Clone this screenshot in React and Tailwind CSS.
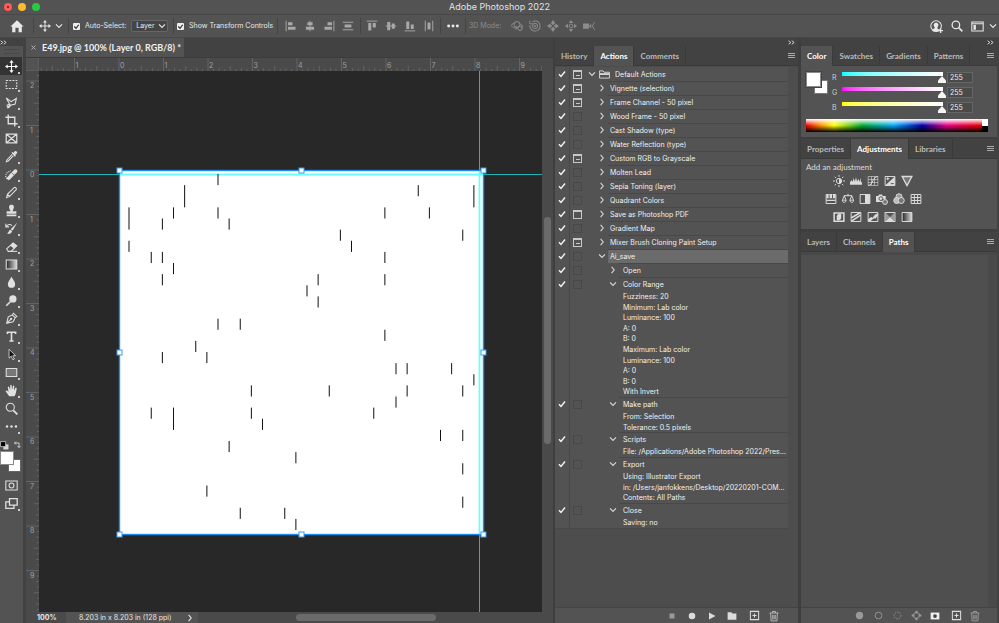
import React, { useState } from "react";

const INCH = 44.5;

// [column, row, length] on the 32 x 32 grid of the artwork
const MARKS = [
    [8, 0, 1], [5, 1, 2], [26, 1, 1], [31, 1, 2], [0, 3, 2], [4, 3, 1], [8, 3, 1], [23, 3, 1], [27, 3, 1],
    [3, 4, 1], [9, 4, 1], [19, 5, 1], [30, 5, 1], [0, 6, 1], [20, 6, 1], [2, 7, 1], [3, 7, 1], [23, 7, 1],
    [4, 8, 1], [3, 9, 1], [17, 9, 1], [23, 9, 1], [16, 10, 1], [17, 11, 1], [8, 13, 1], [10, 13, 1],
    [23, 14, 1], [6, 15, 1], [3, 16, 1], [7, 16, 1], [24, 17, 1], [25, 17, 1], [29, 17, 1], [31, 18, 1],
    [11, 19, 1], [18, 19, 1], [25, 19, 1], [30, 19, 1], [24, 20, 1], [2, 21, 1], [4, 21, 2], [11, 21, 1],
    [22, 21, 1], [12, 22, 1], [28, 23, 1], [30, 23, 1], [9, 24, 1], [15, 25, 1], [30, 26, 1], [7, 28, 1],
    [30, 29, 1], [10, 30, 1], [14, 30, 1], [15, 31, 1],
];

const ACTIONS = [
    { label: "Default Actions", depth: 0, open: true, dialog: "mixed", folder: true },
    { label: "Vignette (selection)", depth: 1, dialog: "mixed" },
    { label: "Frame Channel - 50 pixel", depth: 1, dialog: "mixed" },
    { label: "Wood Frame - 50 pixel", depth: 1 },
    { label: "Cast Shadow (type)", depth: 1 },
    { label: "Water Reflection (type)", depth: 1 },
    { label: "Custom RGB to Grayscale", depth: 1, dialog: "mixed" },
    { label: "Molten Lead", depth: 1 },
    { label: "Sepia Toning (layer)", depth: 1 },
    { label: "Quadrant Colors", depth: 1 },
    { label: "Save as Photoshop PDF", depth: 1, dialog: "on" },
    { label: "Gradient Map", depth: 1 },
    { label: "Mixer Brush Cloning Paint Setup", depth: 1, dialog: "mixed" },
    { label: "Ai_save", depth: 1, open: true, selected: true },
    { label: "Open", depth: 2 },
    {
        label: "Color Range",
        depth: 2,
        open: true,
        size: "h-[106px]",
        details: [
            "Fuzziness: 20",
            "Minimum: Lab color",
            "Luminance: 100",
            "A: 0",
            "B: 0",
            "Maximum: Lab color",
            "Luminance: 100",
            "A: 0",
            "B: 0",
            "With Invert",
        ],
    },
    { label: "Make path", depth: 2, open: true, size: "h-[21px]", details: ["From: Selection", "Tolerance: 0.5 pixels"] },
    { label: "Scripts", depth: 2, open: true, size: "h-[11px]", details: ["File: /Applications/Adobe Photoshop 2022/Presets/Scripts"] },
    {
        label: "Export",
        depth: 2,
        open: true,
        size: "h-[32px]",
        details: ["Using: Illustrator Export", "in: /Users/janfokkens/Desktop/20220201-COMPOSITION", "Contents: All Paths"],
    },
    { label: "Close", depth: 2, open: true, size: "h-[11px]", details: ["Saving: no"] },
];

const Svg = ({ size = "size-[14px]", children }) => (
    <svg
        viewBox="0 0 16 16"
        className={`${size} shrink-0`}
        fill="none"
        stroke="currentColor"
        strokeWidth="1.3"
        aria-hidden="true"
    >
        {children}
    </svg>
);

const solid = { fill: "currentColor", stroke: "none" };

const movePath = (
    <>
        <path d="M8 2v12M2 8h12" />
        <path {...solid} d="M8 0l2.6 3.4H5.4zM8 16l2.6-3.4H5.4zM0 8l3.4-2.6v5.2zM16 8l-3.4-2.6v5.2z" />
    </>
);

const Chevron = ({ open = true }) => (
    <svg viewBox="0 0 8 8" className="size-[8px] shrink-0" fill="none" stroke="currentColor" strokeWidth="1.1" aria-hidden="true">
        <path d={open ? "M1 2.3l3 3.2 3-3.2" : "M2.6 .8l2.6 3.2-2.6 3.2"} />
    </svg>
);

const DoubleChevron = () => (
    <svg viewBox="0 0 12 8" className="h-[5px] w-[7px]" fill="none" stroke="#ddd" strokeWidth="1.6" aria-hidden="true">
        <path d="M1 1l4 3-4 3M6.5 1l4 3-4 3" />
    </svg>
);

const PlusBox = () => (
    <Svg size="size-[11px]">
        <path d="M2 2h12v12H2zM8 5v6M5 8h6" strokeWidth="1.5" />
    </Svg>
);

const Trash = () => (
    <Svg size="size-[12px]">
        <path d="M2 4h12M6 4V2h4v2M3.5 4l.6 10.5h7.8l.6-10.5M6.3 6.5v6M8 6.5v6M9.7 6.5v6" />
    </Svg>
);

const TOOLS = [
    { name: "Move", active: true, icon: movePath },
    { name: "Marquee", icon: <path d="M1.5 3h13v10h-13z" strokeDasharray="2.4 1.4" /> },
    { name: "Lasso", icon: <path d="M1.5 2.5l6 4.5 6.500-4-1.500 7-6 1.500zM6.500 11.500c-3-2-5 0-3.500 1.200 1.500 1 2.500-1 3.500-1.200-.5 2-2 3-4 3" /> },
    { name: "Crop", icon: <path d="M4 .5V12h11.500M.5 4H12v11.500" strokeWidth="1.7" /> },
    { name: "Frame", single: true, icon: <path d="M1.5 2.5h13v11h-13zM1.500 2.500l13 11M14.500 2.500l-13 11" strokeWidth="1.5" /> },
    {
        name: "Eyedropper",
        icon: (
            <>
                <path d="M9 5.500l-6.500 6.500-.8 2.300 2.300-.8L10.500 7" />
                <path {...solid} d="M8 3.500l1.200-1 1.300 1.200c1-2 2-3 3.500-2.200 2 1.500 1 3-1.500 4.200l1 1.300-1.200 1.200z" />
            </>
        ),
    },
    {
        name: "Healing Brush",
        icon: (
            <>
                <path {...solid} d="M6 7.500L11.500 2c2-1.500 5 1.200 3.200 3.300L9 11c-2 1.800-5-1.200-3-3.500z" />
                <path d="M5 14.500a5 5 0 01-2-9l4-2" strokeDasharray="1.5 1" />
                <path {...solid} d="M3 11l3-3 3 3-3 3c-2 1.500-5-1-3-3z" />
                <path d="M8 5.500l3.500 3.500" stroke="#535353" strokeWidth=".9" />
            </>
        ),
    },
    { name: "Brush", icon: <path d="M2 14.300l1-4L11.200 2c1.500-1 3.600.8 2.600 2.600L5.800 12.800zM3 10.300l2.800 2.500" /> },
    { name: "Clone Stamp", icon: <path {...solid} d="M6.500 8C3.500 3.500 5.500 1 8 1s4.500 2.500 1.500 7v1H14v3H2V9h4.500zM2 13h12v2H2z" /> },
    {
        name: "History Brush",
        icon: (
            <>
                <path {...solid} d="M15 1L9.500 10.500 7 8.800zM6.500 9.500l2.200 1.700c0 2.500-3 4.300-6.200 3 2-.8 2-4 4-4.700z" />
                <path d="M1.500 5.500c2-3 5-3 7-1M1 2v4h4" />
            </>
        ),
    },
    {
        name: "Eraser",
        icon: (
            <>
                <path d="M2 11l8-7.500 4.500 3.500-7 7H4z" />
                <path {...solid} d="M6.500 7L10 3.500 14.500 7 11 10.500z" />
                <path d="M7 14h8" />
            </>
        ),
    },
    { name: "Gradient", icon: <path d="M1.500 2.500h13v11h-13z" fill="url(#toolGradient)" /> },
    { name: "Blur", icon: <path {...solid} d="M8 1c1.500 3 4.500 6 4.500 9a4.500 4.500 0 01-9 0c0-3 3-6 4.500-9z" /> },
    {
        name: "Dodge",
        icon: (
            <>
                <circle {...solid} cx="9.7" cy="6" r="4.5" />
                <path d="M6.500 9.500L1.500 14.500" strokeWidth="2" />
            </>
        ),
    },
    {
        name: "Pen",
        icon: (
            <>
                <path d="M2 14l2-8 5-2.500 3.500 3.500L10 12zM2 14l5-5M9 3.500l1.500-2 4 4-2 1.500" />
                <circle {...solid} cx="7.5" cy="8.5" r="1.4" />
            </>
        ),
    },
    { name: "Type", icon: <path d="M3 5V2.800h10V5M8 2.800v10.700M5.500 13.500h5" strokeWidth="2" /> },
    { name: "Path Selection", icon: <path d="M5 1.500v11l2.700-2.500 2 4.500 1.800-.8-2-4.200h3.500z" fill="#111" strokeWidth="1" /> },
    { name: "Rectangle", icon: <path d="M1.500 3h13v10h-13z" fill="#777" /> },
    {
        name: "Hand",
        icon: (
            <path
                {...solid}
                d="M5 15c-1-2-3-4-4.300-6.200C1.300 7.500 3 8 4.200 9.700L3.500 4c0-1.300 1.500-1.300 1.800 0L6.200 7.500 6.500 2c.2-1.300 1.700-1.300 1.800 0l.3 5.300L9.800 2.500c.4-1.200 1.800-.9 1.700.3L11 8l1.700-3c.7-1 2-.4 1.700.8C13.700 9 13.500 13 11.500 15z"
            />
        ),
    },
    {
        name: "Zoom",
        single: true,
        icon: (
            <>
                <circle cx="6.5" cy="6.5" r="5" />
                <path d="M10.200 10.200l5 5" strokeWidth="2.2" />
            </>
        ),
    },
    {
        name: "Edit Toolbar",
        icon: (
            <g {...solid}>
                <circle cx="2.5" cy="8" r="1.5" />
                <circle cx="8" cy="8" r="1.5" />
                <circle cx="13.5" cy="8" r="1.5" />
            </g>
        ),
    },
];

const ToolButton = ({ name, icon, active, single }) => (
    <button
        type="button"
        aria-label={name}
        className={`relative flex h-[18px] w-[22px] items-center justify-center ${active ? "bg-[#333] text-white" : "text-[#e0e0e0]"}`}
    >
        <Svg size="size-[13px]">{icon}</Svg>
        {!single && <span className="absolute bottom-[1px] right-[2px] size-[2px] bg-[#ccc]" />}
    </button>
);

const Toolbar = () => (
    <aside className="flex w-[26px] shrink-0 flex-col border-r-[3px] border-[#424242] bg-[#535353]">
        <div className="flex h-2 items-center bg-[#424242]">
            <DoubleChevron />
        </div>
        <div className="mx-1 my-[3px] h-[5px] border-y border-[#484848]" />
        {TOOLS.map((tool) => (
            <ToolButton key={tool.name} {...tool} />
        ))}
        <div className="mt-1 flex h-3 items-center gap-1 text-[#d8d8d8]">
            <button type="button" aria-label="Default colors">
                <Svg size="size-[9px]">
                    <path {...solid} d="M6 6h9v9H6z" />
                    <path d="M1 1h9v9H1z" fill="#000" />
                </Svg>
            </button>
            <button type="button" aria-label="Switch colors">
                <Svg size="size-[8px]">
                    <path d="M3 4h9v9M6 1L3 4l3 3M9 10l3 3 3-3" strokeWidth="1.8" />
                </Svg>
            </button>
        </div>
        <div className="relative h-[22px]">
            <button type="button" aria-label="Background color" className="absolute left-2 top-2 size-[13px] border border-[#666] bg-white" />
            <button type="button" aria-label="Foreground color" className="absolute left-0 top-0 size-[14px] border border-[#888] bg-white" />
        </div>
        <div className="mt-[3px] flex flex-col">
            <ToolButton
                name="Quick Mask"
                single
                icon={
                    <>
                        <path d="M1 2.500h14v11H1z" />
                        <circle cx="8" cy="8" r="3" />
                    </>
                }
            />
            <ToolButton
                name="Screen Mode"
                icon={<path d="M5.500 2h9.500v8H5.500zM5.500 6H1v8h10v-4" strokeWidth="1.6" />}
            />
        </div>
    </aside>
);

const ALIGN_A = [
    ["Align left", "M1.500 1v14", "M4 3h6v4H4zM4 9h10v4H4z"],
    ["Align center", "M8 1v14", "M4.500 3h7v4h-7zM2.500 9h11v4h-11z"],
    ["Align right", "M14.500 1v14", "M6 3h6v4H6zM2 9h10v4H2z"],
    ["Distribute vertically", "M1 3h14M1 13h14", "M3.500 6h9v4h-9z"],
];
const ALIGN_B = [
    ["Align top", "M1 1.500h14", "M3 4h4v10H3zM9 4h4v6H9z"],
    ["Align middle", "M1 8h14", "M3 2.500h4v11H3zM9 4.500h4v7H9z"],
    ["Align bottom", "M1 14.500h14", "M3 2h4v10H3zM9 6h4v6H9z"],
    ["Distribute horizontally", "M3 1v14M13 1v14", "M6 3.500h4v9H6z"],
];

const AlignButton = ({ item }) => (
    <button type="button" aria-label={item[0]}>
        <Svg size="size-[12px]">
            <path d={item[1]} />
            <path {...solid} d={item[2]} />
        </Svg>
    </button>
);

const CheckOption = ({ label }) => (
    <label className="flex items-center gap-[5px]">
        <span className="relative flex size-[7px]">
            <input type="checkbox" defaultChecked className="peer size-[7px] appearance-none rounded-[1px] bg-[#777] checked:bg-[#eee]" />
            <svg viewBox="0 0 8 8" className="pointer-events-none absolute inset-0 hidden peer-checked:block" fill="none" stroke="#333" strokeWidth="1.4" aria-hidden="true">
                <path d="M1.500 4l2 2L6.500 2" />
            </svg>
        </span>
        {label}
    </label>
);

const OptionsBar = () => (
    <div className="flex h-6 items-center border-y border-[#484848] text-[#e8e8e8] [&>div]:flex [&>div]:h-4 [&>div]:shrink-0 [&>div]:items-center">
        <div className="w-[34px] justify-center border-r border-[#444]">
            <button type="button" aria-label="Home">
                <Svg>
                    <path {...solid} d="M8 1.500l7.500 7H13.500V15H9.800v-5H6.200v5H2.500V8.500H.5z" />
                </Svg>
            </button>
        </div>
        <div className="w-[35px] justify-center gap-1 border-r border-[#444]">
            <Svg size="size-[12px]">{movePath}</Svg>
            <Chevron />
        </div>
        <div className="w-[105px] gap-[5px] border-r border-[#444] pl-1">
            <CheckOption label="Auto-Select:" />
            <span className="relative flex items-center">
                <select aria-label="Auto-select target" className="h-3 w-[37px] appearance-none rounded-[2px] border border-[#666] bg-[#454545] pl-1 leading-[10px]">
                    <option>Layer</option>
                    <option>Group</option>
                </select>
                <span className="pointer-events-none absolute right-[2px]">
                    <Chevron />
                </span>
            </span>
        </div>
        <div className="w-[104px] border-r border-[#444] pl-[3px]">
            <CheckOption label="Show Transform Controls" />
        </div>
        <div className="w-[83px] justify-center gap-[7px] border-r border-[#444] text-[#a8a8a8]">
            {ALIGN_A.map((item) => (
                <AlignButton key={item[0]} item={item} />
            ))}
        </div>
        <div className="w-[80px] justify-center gap-[7px] border-r border-[#444] text-[#a8a8a8]">
            {ALIGN_B.map((item) => (
                <AlignButton key={item[0]} item={item} />
            ))}
        </div>
        <div className="w-[25px] justify-center border-r border-[#444]">
            <button type="button" aria-label="More options">
                <Svg>
                    <g {...solid}>
                        <circle cx="3" cy="8" r="1.7" />
                        <circle cx="8" cy="8" r="1.7" />
                        <circle cx="13" cy="8" r="1.7" />
                    </g>
                </Svg>
            </button>
        </div>
        <div className="gap-[6px] pl-[3px] text-[#8c8c8c]">
            <span className="mr-1">3D Mode:</span>
            <Svg size="size-[12px]">
                <circle cx="8" cy="6" r="4" />
                <path d="M5 4C-1 5 0 10 5 10.500h3M11 5c6 1 5 5 2 6M6 8l2.500 2.500L6 13" />
                <circle cx="12" cy="11" r="3" />
            </Svg>
            <Svg size="size-[12px]">
                <circle cx="8" cy="8" r="6.8" strokeDasharray="36 7" transform="rotate(-120 8 8)" />
                <path d="M1 1v4h4.500" />
                <circle cx="8" cy="8" r="3.5" />
                <circle cx="8" cy="8" r="1" />
            </Svg>
            <Svg size="size-[12px]">
                <path {...solid} d="M8 0l3 4-3 3-3-3zM8 16l3-4-3-3-3 3zM0 8l4-3 3 3-3 3zM16 8l-4-3-3 3 3 3z" />
            </Svg>
            <Svg size="size-[12px]">
                <path {...solid} d="M8 0l3 4H5zM8 16l3-4H5zM0 8l4-3v6zM16 8l-4-3v6z" />
                <circle cx="8" cy="8" r="2.5" />
            </Svg>
            <Svg size="size-[12px]">
                <path {...solid} d="M0 4.500h8v7H0zM8 8l3-3v6z" />
                <path d="M15.500 3l-3 5 3 5" />
            </Svg>
        </div>
        <div className="ml-auto gap-2 pr-[2px]">
            <button type="button" aria-label="Account">
                <Svg size="size-[13px]">
                    <circle cx="7.5" cy="7.5" r="6.5" />
                    <path {...solid} d="M3 13c0-2 3-2.500 3-3.500-2.500-3-1.500-6 1.500-6s4 3 1.500 6c0 1 1 1.500 2 2l-1 2.500H4z" />
                    <path d="M13 10v6M10 13h6" strokeWidth="1.6" />
                </Svg>
            </button>
            <button type="button" aria-label="Search">
                <Svg size="size-[12px]">
                    <circle cx="6.5" cy="6.5" r="5" strokeWidth="1.7" />
                    <path d="M10.200 10.200l5 5" strokeWidth="2" />
                </Svg>
            </button>
            <button type="button" aria-label="Workspace" className="flex items-center gap-[5px]">
                <Svg size="size-[13px]">
                    <path d="M1 2.500h14v11H1zM1 4.500h14" />
                    <path {...solid} d="M3 6h3v6H3z" />
                </Svg>
                <Chevron />
            </button>
        </div>
    </div>
);

const Ruler = ({ vertical }) => {
    const origin = vertical ? 99 : 80;
    const ticks = [];
    for (let i = -17; i <= 104; i++) {
        const pos = origin + (i * INCH) / 8;
        const len = i % 8 === 0 ? 13 : i % 4 === 0 ? 5 : i % 2 === 0 ? 3 : 2;
        ticks.push(<path key={i} d={vertical ? `M${13 - len} ${pos}h${len}` : `M${pos} ${13 - len}v${len}`} />);
    }
    const labels = [];
    for (let n = vertical ? -2 : -1; n <= 9; n++) {
        const pos = origin + n * INCH;
        labels.push(
            <text key={n} x={vertical ? 4 : pos + 1} y={vertical ? pos + 7 : 10}>
                {Math.abs(n)}
            </text>
        );
    }
    return (
        <svg className={vertical ? "h-full w-[13px] shrink-0" : "h-[13px] min-w-0 flex-1"} aria-hidden="true">
            <g stroke="#636363" strokeWidth="1">{ticks}</g>
            <g fill="#a0a0a0" fontSize="7">{labels}</g>
        </svg>
    );
};

const Canvas = () => {
    const handles = [
        [0, 0], [182, 0], [364, 0], [0, 182], [364, 182], [0, 364], [182, 364], [364, 364],
    ];
    return (
        <svg className="h-full min-w-0 flex-1 bg-[#282828]" role="img" aria-label="Layer 0">
            <rect x="0" y="103" width="100%" height="1" fill="#1fb4b8" />
            <rect x="440" y="0" width="1" height="100%" fill="#1fb4b8" />
            <g transform="translate(80 99)">
                <rect x=".5" y=".5" width="364" height="364" fill="#fff" stroke="#1f8cf0" strokeWidth="1.4" />
                <rect x="1" y="3.6" width="363" height="1.8" fill="#66ffff" />
                <rect x="359.600" y="1" width="1.8" height="363" fill="#66ffff" />
                {MARKS.map(([col, row, len]) => (
                    <rect key={`${col}-${row}`} x={9.5 + col * 11.125} y={4 + row * 11.125} width="1" height={len * 11.125} fill="#111" />
                ))}
                {handles.map(([x, y]) => (
                    <rect key={`${x}-${y}`} x={x - 2} y={y - 2} width="5" height="5" fill="#fff" stroke="#3c9cf0" />
                ))}
            </g>
        </svg>
    );
};

const DocumentWindow = () => (
    <main className="flex min-w-0 flex-1 flex-col bg-[#4a4a4a]">
        <div className="flex h-5 border-b border-[#3c3c3c] bg-[#424242]">
            <div className="flex w-[158px] items-center gap-[6px] bg-[#535353] pl-[5px] font-['Lato',sans-serif] text-[9px] font-bold text-[#f0f0f0]">
                <button type="button" aria-label="Close document" className="text-[#bbb]">
                    <svg viewBox="0 0 6 6" className="size-[5px]" stroke="currentColor" strokeWidth="1" aria-hidden="true">
                        <path d="M.5 .5l5 5M5.500 .5l-5 5" />
                    </svg>
                </button>
                <span className="whitespace-nowrap">E49.jpg @ 100% (Layer 0, RGB/8) *</span>
            </div>
        </div>
        <div className="flex h-[13px]">
            <div className="w-[13px] border-b border-r border-[#5c5c5c] bg-[#535353]" />
            <Ruler />
            <div className="w-[11px]" />
        </div>
        <div className="flex min-h-0 flex-1">
            <Ruler vertical />
            <Canvas />
            <div className="w-[11px] px-[2px] pt-[146px]">
                <div className="h-[227px] rounded-full bg-[#6b6b6b]" />
            </div>
        </div>
        <div className="flex h-[11px] items-center text-[#e6e6e6]">
            <span className="w-[40px] pl-[11px] font-bold">100%</span>
            <button type="button" className="flex h-[11px] items-center gap-[14px] bg-[#535353] pl-[13px] pr-1">
                8.203 in x 8.203 in (128 ppi)
                <Chevron open={false} />
            </button>
            <div className="flex-1 pl-[98px]">
                <div className="h-[7px] w-[140px] rounded-full bg-[#6b6b6b]" />
            </div>
        </div>
    </main>
);

const PanelTabs = ({ tabs, initial, label }) => {
    const [active, setActive] = useState(initial);

    return (
        <div role="tablist" aria-label={label} className="flex h-5 shrink-0 bg-[#424242] font-['Lato',sans-serif] text-[8px] font-bold">
            {tabs.map((tab) => (
                <button
                    key={tab}
                    type="button"
                    role="tab"
                    aria-selected={tab === active}
                    onClick={() => setActive(tab)}
                    className={`border-r border-[#3a3a3a] px-[6px] ${tab === active ? "bg-[#535353] text-white" : "border-b text-[#bababa]"}`}
                >
                    {tab}
                </button>
            ))}
            <div className="flex flex-1 items-center justify-end border-b border-[#3a3a3a] pr-[3px]">
                <button type="button" aria-label={`${label} menu`}>
                    <svg viewBox="0 0 7 6" className="h-[6px] w-[7px]" stroke="#aaa" strokeWidth="1" aria-hidden="true">
                        <path d="M0 .5h7M0 2.500h7M0 4.500h7" />
                    </svg>
                </button>
            </div>
        </div>
    );
};

const PanelStrip = () => (
    <div className="flex h-2 shrink-0 items-center justify-end bg-[#424242] pr-[3px]">
        <DoubleChevron />
    </div>
);

const DIALOG_STYLE = {
    mixed: "border-[#c8c8c8] border-t-2 flex items-center justify-center",
    on: "border-[#c8c8c8] border-t-2",
};

const INDENT = ["w-[17px] pl-[2px]", "w-[22px] pl-[12px]", "w-[33px] pl-[23px]"];
const LABEL_INDENT = ["border-[#535353]", "border-[#484848] pl-[2px]", "border-[#484848] pl-1"];

const ActionRow = ({ action }) => (
    <li className="flex bg-[#535353]">
        <div className="flex w-[15px] shrink-0 justify-center border-r border-[#484848] pt-[3px]">
            <span className="relative flex size-2">
                <input type="checkbox" defaultChecked aria-label={`Toggle ${action.label}`} className="peer size-2 appearance-none" />
                <svg viewBox="0 0 8 8" className="pointer-events-none absolute inset-0 hidden peer-checked:block" fill="none" stroke="#f5f5f5" strokeWidth="1.4" aria-hidden="true">
                    <path d="M1 4.200l2 2.300 4-5" />
                </svg>
            </span>
        </div>
        <div className="w-4 shrink-0 pl-[3px] pt-[3px]">
            <button type="button" aria-label={`Dialog for ${action.label}`} className={`size-[9px] border ${DIALOG_STYLE[action.dialog] || "border-[#484848]"}`}>
                {action.dialog === "mixed" && <span className="h-px w-1 bg-[#c8c8c8]" />}
            </button>
        </div>
        <div className={`shrink-0 pt-[3px] text-[#d8d8d8] ${INDENT[action.depth]}`}>
            <Chevron open={!!action.open} />
        </div>
        <div className={`min-w-0 flex-1 border-t ${LABEL_INDENT[action.depth]} ${action.selected ? "bg-[#6b6b6b]" : ""}`}>
            <div className="flex h-[13px] items-center gap-[5px]">
                {action.folder && (
                    <svg viewBox="0 0 12 10" className="-ml-[4px] h-[9px] w-[11px]" fill="none" stroke="#ddd" aria-hidden="true">
                        <path d="M.5 9V1h4l1 1.500h6V9z" />
                        <path d="M1 3.500h10v2H1z" fill="#ddd" stroke="none" />
                    </svg>
                )}
                {action.label}
            </div>
            {action.details && (
                <ul className={`grid auto-rows-fr leading-[11px] ${action.size}`}>
                    {action.details.map((line, i) => (
                        <li key={i} className="truncate">
                            {line}
                        </li>
                    ))}
                </ul>
            )}
        </div>
    </li>
);

const ActionsPanel = () => (
    <section className="flex w-[248px] shrink-0 flex-col border-l-2 border-r-[3px] border-[#3e3e3e] bg-[#4d4d4d]">
        <PanelStrip />
        <PanelTabs label="Actions panel" tabs={["History", "Actions", "Comments"]} initial="Actions" />
        <div className="min-h-0 flex-1 overflow-hidden pr-[10px] pt-px">
            <ul className="border-b border-[#484848] text-[#f0f0f0]">
                {ACTIONS.map((action) => (
                    <ActionRow key={action.label} action={action} />
                ))}
            </ul>
        </div>
        <div className="flex h-4 shrink-0 items-center justify-end gap-2 border-t border-[#444] bg-[#535353] pr-[18px] text-[#dcdcdc] [&>button]:flex [&>button]:w-3 [&>button]:justify-center">
            <button type="button" aria-label="Stop" className="text-[#999]">
                <Svg size="size-[8px]"><path {...solid} d="M3 3h10v10H3z" /></Svg>
            </button>
            <button type="button" aria-label="Record">
                <Svg size="size-[8px]"><circle {...solid} cx="8" cy="8" r="6.5" /></Svg>
            </button>
            <button type="button" aria-label="Play">
                <Svg size="size-[8px]"><path {...solid} d="M2 1l13 7-13 7z" /></Svg>
            </button>
            <button type="button" aria-label="New set">
                <Svg size="size-[10px]"><path {...solid} d="M1 2h6l1.500 2H15v10H1z" /></Svg>
            </button>
            <button type="button" aria-label="New action" className="ml-[2px]"><PlusBox /></button>
            <button type="button" aria-label="Delete action" className="text-[#b8b8b8]"><Trash /></button>
        </div>
    </section>
);

const CHANNELS = [
    { name: "R", track: "bg-linear-to-r from-[#00ffff] to-white" },
    { name: "G", track: "bg-linear-to-r from-[#ff00ff] to-white" },
    { name: "B", track: "bg-linear-to-r from-[#ffff00] to-white" },
];

const ColorChannel = ({ name, track }) => {
    const [value, setValue] = useState(255);

    return (
        <div className="flex h-[15px] items-center gap-[4px]">
            <label htmlFor={`channel-${name}`} className="w-[6px] text-[#ccc]">{name}</label>
            <div className="w-[101px]">
                <div className={`h-1 ${track}`} />
                <input
                    type="range"
                    min="0"
                    max="255"
                    value={value}
                    onChange={(e) => setValue(Number(e.target.value))}
                    aria-label={`${name} slider`}
                    className="-ml-1 block h-[7px] w-[108px] appearance-none bg-transparent [&::-webkit-slider-thumb]:h-[7px] [&::-webkit-slider-thumb]:w-2 [&::-webkit-slider-thumb]:appearance-none [&::-webkit-slider-thumb]:bg-[#f4f4f4] [&::-webkit-slider-thumb]:[clip-path:polygon(50%_0,100%_65%,100%_100%,0_100%,0_65%)]"
                />
            </div>
            <input
                id={`channel-${name}`}
                type="text"
                value={value}
                onChange={(e) => setValue(Number(e.target.value) || 0)}
                className="h-[11px] w-[26px] border border-[#666] bg-[#4a4a4a] px-[2px] text-[#eee]"
            />
        </div>
    );
};

const ColorPanel = () => (
    <div className="h-[71px] bg-[#535353] pl-[5px] pt-1">
        <div className="flex gap-1">
            <div className="relative mt-[2px] h-[22px] w-[22px]">
                <div className="absolute bottom-0 right-0 size-[14px] border border-[#777] bg-white" />
                <div className="absolute left-0 top-0 size-[15px] border border-[#8a8a8a] bg-white outline outline-[#444]" />
            </div>
            <div>
                {CHANNELS.map((channel) => (
                    <ColorChannel key={channel.name} {...channel} />
                ))}
            </div>
        </div>
        <div className="mr-[9px] mt-1 flex h-[13px]">
            <div className="flex-1 bg-[linear-gradient(to_bottom,#fff,transparent_50%,#000),linear-gradient(to_right,#e00_0%,#f80_8%,#ff0_16%,#0a3_32%,#0af_50%,#00a_66%,#e08_80%,#e00_100%)]" />
            <div className="w-[6px] bg-linear-to-b from-white from-50% to-black to-50%" />
        </div>
    </div>
);

const frame = <path d="M1.500 2h13v12h-13z" />;

const ADJUSTMENTS = [
    [
        ["Brightness/Contrast", <><circle cx="8" cy="8" r="3.5" /><path {...solid} d="M8 4.500a3.500 3.500 0 010 7z" /><path d="M8 0v2.500M8 13.500V16M0 8h2.500M13.500 8H16M2.300 2.300L4 4M12 12l1.700 1.700M13.700 2.300L12 4M4 12l-1.700 1.700" /></>],
        ["Levels", <path {...solid} d="M0 13V9l2-1V6l1.500 3L5 4l1.500 5L8 3l1.500 6L11 5l1.500 4L14 4l.5 5 1.500 1v3z" />],
        ["Curves", <><path d="M1.500 2h13v12h-13zM6 2v12M10 2v12M1.500 6h13M1.500 10h13" strokeWidth=".8" /><path d="M1.500 14C9 13 6 3 14.500 2" /></>],
        ["Exposure", <>{frame}<path {...solid} d="M14.500 2v12h-13z" /><path d="M3 5h4M5 3v4" /><path d="M9 11.500h4" stroke="#535353" /></>],
        ["Vibrance", <path d="M1.500 2h13L8 14z" fill="#777" strokeWidth="1.8" />],
    ],
    [
        ["Hue/Saturation", <>{frame}<path {...solid} d="M2 2h12v5H2zM2 9h12v1.500H2z" /><path d="M5.500 2v5M10 2v5" stroke="#535353" /></>],
        ["Color Balance", <path d="M3 3.500h10M8 1v3M3 3.500L.8 9M3 3.500L5.200 9M13 3.500L10.800 9M13 3.500L15.200 9M.5 9.500c0 4 5 4 5 0zM10.500 9.500c0 4 5 4 5 0z" />],
        ["Black & White", <>{frame}<path {...solid} d="M8 2h6.500v12H8z" /></>],
        ["Photo Filter", <><path {...solid} d="M0 4h3l1-2h4l1 2h4v4H0zM0 8h8v4H0z" /><circle cx="6.5" cy="7.5" r="2.5" stroke="#535353" /><circle cx="12" cy="12" r="3.3" fill="#777" /></>],
        ["Channel Mixer", <><circle cx="8" cy="5" r="4" fill="#999" /><circle cx="5" cy="10" r="4" fill="#bbb" /><circle cx="11" cy="10" r="4" fill="#777" /></>],
        ["Color Lookup", <path d="M1.500 2h13v12h-13zM5.800 2v12M10.200 2v12M1.500 6h13M1.500 10h13" />],
    ],
    [
        ["Invert", <><path d="M1.500 2.500h13v11h-13z" strokeWidth="2" /><path {...solid} d="M11 4v5a4 4 0 01-6 3V7a4 4 0 016-3z" /></>],
        ["Posterize", <>{frame}<path d="M2 9l12-7M2 13.500l12-8" strokeWidth="2" /></>],
        ["Threshold", <>{frame}<path {...solid} d="M1.500 11l4-3 2 1 3-4 4-2v3l-3 4-3 0-3 3-4 1z" /></>],
        ["Selective Color", <><path d="M1.500 2h13v12h-13z" strokeWidth="1.5" /><path d="M2 2l6 6-6 6zM14 2L8 8l6 6z" fill="#999" stroke="none" /><path {...solid} d="M2 14l6-6 6 6z" /></>],
        ["Gradient Map", <path d="M1.500 2h13v12h-13z" fill="url(#toolGradient)" />],
    ],
];

const AdjustmentsPanel = () => (
    <div className="h-[70px] bg-[#535353] pt-[3px] text-[#dcdcdc]">
        <p className="pl-[5px] font-['Lato',sans-serif] text-[8px] leading-[10px]">Add an adjustment</p>
        {ADJUSTMENTS.map((row, i) => (
            <div key={i} className={`flex h-[18px] items-center gap-[5px] ${i === 1 ? "pl-6" : "pl-8"}`}>
                {row.map(([name, icon]) => (
                    <button key={name} type="button" aria-label={name}>
                        <Svg size="size-[12px]">{icon}</Svg>
                    </button>
                ))}
            </div>
        ))}
    </div>
);

const PathsPanel = () => (
    <>
        <div className="flex min-h-0 flex-1 justify-end border-t-[3px] border-[#484848] bg-[#4f4f4f]">
            <div className="w-[9px] bg-[#4a4a4a]" />
        </div>
        <div className="flex h-4 shrink-0 items-center justify-end gap-[7px] border-t border-[#444] bg-[#535353] pr-4 text-[#999] [&>button]:flex [&>button]:w-3 [&>button]:justify-center">
            <button type="button" aria-label="Fill path">
                <Svg size="size-[9px]"><circle {...solid} cx="8" cy="8" r="6.5" /></Svg>
            </button>
            <button type="button" aria-label="Stroke path">
                <Svg size="size-[9px]"><circle cx="8" cy="8" r="6" strokeWidth="1.6" /></Svg>
            </button>
            <button type="button" aria-label="Load as selection">
                <Svg size="size-[9px]"><circle cx="8" cy="8" r="6" strokeWidth="1.6" strokeDasharray="2.5 2" /></Svg>
            </button>
            <button type="button" aria-label="Make work path">
                <Svg size="size-[11px]">
                    <circle cx="8" cy="8" r="4.5" />
                    <path {...solid} d="M6.500 1h3v4h-3zM6.500 11h3v4h-3zM1 6.500h4v3H1zM11 6.500h4v3h-4z" />
                </Svg>
            </button>
            <button type="button" aria-label="Add mask" className="text-[#eee]">
                <Svg size="size-[10px]">
                    <path {...solid} d="M1 2.500h14v11H1z" />
                    <circle cx="8" cy="8" r="3" fill="#444" stroke="none" />
                </Svg>
            </button>
            <button type="button" aria-label="New path" className="ml-[2px] text-[#ddd]"><PlusBox /></button>
            <button type="button" aria-label="Delete path"><Trash /></button>
        </div>
    </>
);

const App = () => {
    return (
        <div className="flex h-screen flex-col overflow-hidden bg-[#424242] font-['Inter',sans-serif] text-[7px] leading-[10px] text-[#e2e2e2]">
            <svg className="absolute size-0" aria-hidden="true">
                <linearGradient id="toolGradient">
                    <stop offset="0" stopColor="#222" />
                    <stop offset="1" stopColor="#ddd" />
                </linearGradient>
            </svg>
            <header className="shrink-0 bg-[#535353]">
                <div className="grid h-[14px] grid-cols-[1fr_auto_1fr] items-center">
                    <div className="flex gap-[6px] pl-1">
                        <button type="button" aria-label="Close" className="flex size-2 items-center justify-center rounded-full bg-[#fc5b57]">
                            <span className="size-[2px] rounded-full bg-[#7a0f0c]" />
                        </button>
                        <button type="button" aria-label="Minimize" className="size-2 rounded-full bg-[#fdbc2e]" />
                        <button type="button" aria-label="Full screen" className="size-2 rounded-full bg-[#28c840]" />
                    </div>
                    <h1 className="text-[9px]">Adobe Photoshop 2022</h1>
                </div>
                <OptionsBar />
            </header>
            <div className="flex min-h-0 flex-1">
                <Toolbar />
                <DocumentWindow />
                <ActionsPanel />
                <section className="flex w-[198px] shrink-0 flex-col border-r-2 border-[#424242]">
                    <PanelStrip />
                    <PanelTabs label="Color panel" tabs={["Color", "Swatches", "Gradients", "Patterns"]} initial="Color" />
                    <ColorPanel />
                    <div className="h-[2px] shrink-0 bg-[#3e3e3e]" />
                    <PanelTabs label="Adjustments panel" tabs={["Properties", "Adjustments", "Libraries"]} initial="Adjustments" />
                    <AdjustmentsPanel />
                    <div className="h-[3px] shrink-0 bg-[#3e3e3e]" />
                    <PanelTabs label="Paths panel" tabs={["Layers", "Channels", "Paths"]} initial="Paths" />
                    <PathsPanel />
                </section>
            </div>
        </div>
    );
};

export default App;
